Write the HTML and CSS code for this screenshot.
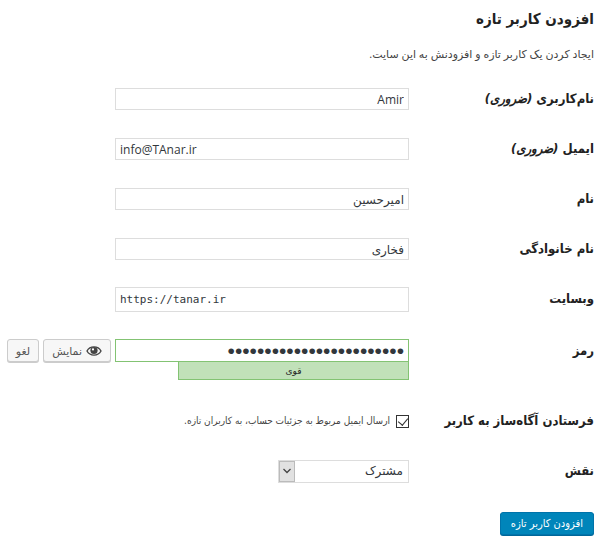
FILE: index.html
```html
<!DOCTYPE html>
<html lang="fa" dir="rtl">

<head>
  <meta charset="UTF-8">
  <title>افزودن کاربر تازه</title>
  <link rel="stylesheet" href="styles.css">
</head>

<body>
  <h1>افزودن کاربر تازه</h1>
  <p class="intro">ایجاد کردن یک کاربر تازه و افزودنش به این سایت.</p>

  <form>
    <div class="row">
      <label for="user_login">نام‌کاربری <em>(ضروری)</em></label>
      <input class="text" type="text" id="user_login" value="Amir">
    </div>
    <div class="row">
      <label for="email">ایمیل <em>(ضروری)</em></label>
      <input class="text ltr" type="email" id="email" value="info@TAnar.ir">
    </div>
    <div class="row">
      <label for="first_name">نام</label>
      <input class="text" type="text" id="first_name" value="امیرحسین">
    </div>
    <div class="row">
      <label for="last_name">نام خانوادگی</label>
      <input class="text" type="text" id="last_name" value="فخاری">
    </div>
    <div class="row">
      <label for="url">وبسایت</label>
      <input class="text ltr code" type="url" id="url" value="https://tanar.ir">
    </div>
    <div class="row row-pass">
      <label for="pass">رمز</label>
      <div class="pass">
        <div class="pass-field">
          <input class="text strong" type="password" id="pass" value="abcdefghijklmnopqrstuvwx">
          <div class="strength">قوی</div>
        </div>
        <button class="button" type="button">
          <svg class="eye" viewBox="0 0 16 12" width="16" height="12">
            <path d="M1 6C4 0.5 12 0.5 15 6C12 11.5 4 11.5 1 6Z" fill="none" stroke="#444" stroke-width="1.4"/>
            <circle cx="8" cy="5.5" r="3.6" fill="#444"/>
            <circle cx="7" cy="4.4" r="1.1" fill="#fff"/>
          </svg>
          نمایش
        </button>
        <button class="button" type="button">لغو</button>
      </div>
    </div>
    <div class="row">
      <label for="notify">فرستادن آگاه‌ساز به کاربر</label>
      <div class="check">
        <input type="checkbox" id="notify" checked>
        <label for="notify">ارسال ایمیل مربوط به جزئیات حساب، به کاربران تازه.</label>
      </div>
    </div>
    <div class="row">
      <label for="role">نقش</label>
      <div class="select">
        <select id="role">
          <option>مشترک</option>
        </select>
        <span class="arrow">
          <svg viewBox="0 0 8 6" width="8" height="6">
            <path d="M0.5 1L4 4.5L7.5 1" fill="none" stroke="#444" stroke-width="1.3"/>
          </svg>
        </span>
      </div>
    </div>
    <button class="button primary" type="submit">افزودن کاربر تازه</button>
  </form>
</body>

</html>
```
FILE: styles.css
```css
* {
  box-sizing: border-box;
}

body {
  margin: 0;
  padding: 8px 6px;
  background: #fff;
  color: #444;
  font: 12px/20px "Open Sans", "DejaVu Sans", sans-serif;
}

h1 {
  margin: 0;
  color: #222;
  font: bold 15px/22px "DejaVu Sans Condensed", "DejaVu Sans", sans-serif;
}

.intro {
  margin: 14px 0 10px;
  font-size: 11px;
}

.row {
  display: grid;
  grid-template-columns: 185px 1fr;
  align-items: center;
  min-height: 50px;
}

.row > label {
  color: #222;
  font: bold 13px/20px "DejaVu Sans Condensed", "DejaVu Sans", sans-serif;
}

.text {
  width: 294px;
  height: 22px;
  padding: 0 4px;
  border: 1px solid #ddd;
  background: #fff;
  color: #32373c;
  font: inherit;
}

.ltr {
  direction: ltr;
}

.code {
  height: 25px;
  font-family: "DejaVu Sans Mono", monospace;
  font-size: 11px;
}

.row-pass {
  align-items: start;
  min-height: 72px;
  padding-top: 15px;
}

.row-pass > label {
  line-height: 24px;
}

.pass {
  display: flex;
  align-items: flex-start;
  gap: 4px;
}

.pass-field {
  width: 294px;
}

.strong {
  display: block;
  height: 23px;
  border-color: #83c373;
  font-family: "Liberation Sans", sans-serif;
  font-size: 21px;
}

.strength {
  width: 231px;
  border: 1px solid #83c373;
  border-top: 0;
  background: #c1e1b9;
  color: #222;
  font-size: 9px;
  line-height: 17px;
  text-align: center;
}

.button {
  display: inline-flex;
  align-items: center;
  gap: 4px;
  height: 23px;
  padding: 0 8px;
  border: 1px solid #ccc;
  border-radius: 3px;
  background: #f7f7f7;
  box-shadow: 0 1px 0 #ccc;
  color: #555;
  font: inherit;
  font-size: 11px;
  white-space: nowrap;
}

.check {
  display: flex;
  align-items: center;
  gap: 6px;
  font-family: "DejaVu Sans Condensed", "DejaVu Sans", sans-serif;
  font-size: 10px;
}

.check input {
  appearance: none;
  display: flex;
  justify-content: center;
  flex: none;
  width: 13px;
  height: 13px;
  margin: 0;
  border: 1px solid #333;
  background: #fff;
}

.check input:checked::before {
  content: "";
  width: 5px;
  height: 8px;
  border: solid #333;
  border-width: 0 1px 1px 0;
  transform: rotate(40deg);
}

.select {
  position: relative;
  width: 131px;
}

.select select {
  appearance: none;
  display: block;
  width: 100%;
  height: 23px;
  padding: 0 5px;
  border: 1px solid #ddd;
  border-radius: 0;
  background: #fff;
  color: #32373c;
  font: inherit;
}

.arrow {
  position: absolute;
  top: 1px;
  bottom: 1px;
  left: 1px;
  display: flex;
  align-items: center;
  justify-content: center;
  width: 16px;
  border: 1px solid #bbb;
  background: #e1e1e1;
  pointer-events: none;
}

.primary {
  margin-top: 16px;
  padding: 0 10px;
  border-color: #0073aa;
  background: #0085ba;
  box-shadow: 0 1px 0 #006799;
  color: #fff;
  font-family: "DejaVu Sans Condensed", "DejaVu Sans", sans-serif;
}
```
